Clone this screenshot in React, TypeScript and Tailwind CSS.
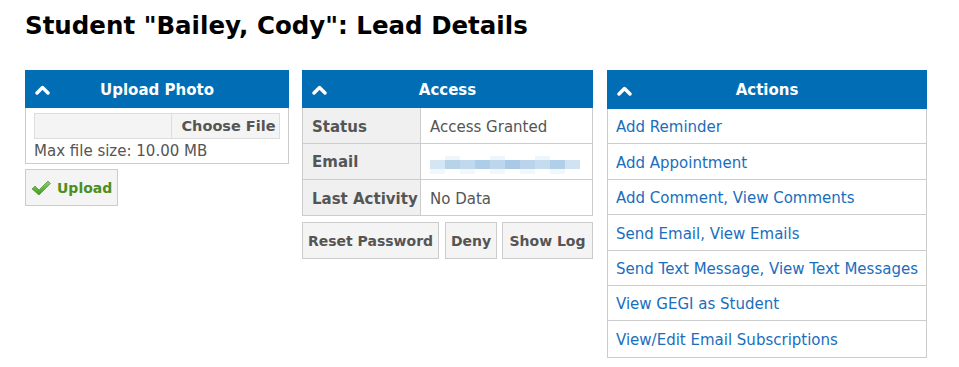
import React from 'react';

const font = { fontFamily: '"DejaVu Sans", Verdana, sans-serif' };

const Chevron = () => (
  <svg width="15" height="10" viewBox="0 0 15 10" className="block">
    <polyline points="2,8 7.5,2.5 13,8" fill="none" stroke="#fff" strokeWidth="3.4" strokeLinecap="round" strokeLinejoin="round" />
  </svg>
);

const PanelHeader = ({ title, h = 'h-[38px]' }: { title: string; h?: string }) => (
  <div className={`grid grid-cols-[40px_1fr_40px] items-center ${h} bg-[#006db5] text-white font-bold text-[15px] pt-[2px]`}>
    <div className="pl-[10px]">
      <Chevron />
    </div>
    <div className="text-center">{title}</div>
    <div />
  </div>
);

const Check = () => (
  <svg width="20" height="16" viewBox="0 0 20 16" className="block">
    <defs>
      <linearGradient id="chk" x1="0" y1="0" x2="0" y2="1">
        <stop offset="0" stopColor="#8fd16a" />
        <stop offset="1" stopColor="#3f9a1e" />
      </linearGradient>
    </defs>
    <path d="M1 9 L4 6 L8 10 L17 1 L19.5 3.5 L8 15 Z" fill="url(#chk)" stroke="#3b8a1c" strokeWidth="0.6" />
  </svg>
);

const GrayButton = ({ children, className = '' }: { children: React.ReactNode; className?: string }) => (
  <button className={`h-[37px] border border-[#cccccc] bg-[#f4f4f4] text-[#555] font-bold text-[14px] pt-[2px] ${className}`}>
    {children}
  </button>
);

const actions: string[][] = [
  ['Add Reminder'],
  ['Add Appointment'],
  ['Add Comment', 'View Comments'],
  ['Send Email', 'View Emails'],
  ['Send Text Message', 'View Text Messages'],
  ['View GEGI as Student'],
  ['View/Edit Email Subscriptions'],
];

const blurCells = [
  '#d4e6f4', '#b7d3ea', '#c0d9ee', '#aecde8', '#bcd6ec', '#a9c9e6', '#b9d4eb', '#c5dcef', '#b2cfe9', '#d0e3f3',
];

export default function App() {
  return (
    <div className="min-h-screen bg-white px-[25px] pt-[9px]" style={font}>
      <h1 className="text-[24.5px] font-bold text-black leading-[34px] mb-[27px]">Student "Bailey, Cody": Lead Details</h1>
      <div className="flex items-start">
        {/* Upload Photo */}
        <div className="w-[264px]">
          <PanelHeader title="Upload Photo" />
          <div className="border border-t-0 border-[#cccccc] px-[8px] pt-[5px] pb-[2px]">
            <div className="flex h-[26px]">
              <div className="w-[138px] bg-[#f4f4f4] border border-[#dddddd]" />
              <div className="w-[108px] bg-[#f4f4f4] border border-l-0 border-[#dddddd] flex items-center justify-center text-[#555] font-bold text-[14.5px] pt-[2px] pl-[6px]">
                Choose File
              </div>
            </div>
            <div className="text-[15px] text-[#555] leading-[20px] mt-[1px] pt-[1px]">Max file size: 10.00 MB</div>
          </div>
          <button className="mt-[5px] w-[93px] h-[37px] border border-[#cccccc] bg-[#f4f4f4] flex items-center pl-[5px] gap-[6px] pt-[1px]">
            <Check />
            <span className="text-[#4b8f1d] font-bold text-[14px]">Upload</span>
          </button>
        </div>

        {/* Access */}
        <div className="w-[291px] ml-[13px]">
          <PanelHeader title="Access" />
          <div className="border border-t-0 border-[#cccccc] text-[15px] text-[#555]">
            <div className="flex h-[36px] border-b border-[#cccccc]">
              <div className="w-[118px] bg-[#f0f0f0] border-r border-[#cccccc] font-bold pl-[9px] pt-[3px] flex items-center">Status</div>
              <div className="flex-1 pl-[9px] pt-[3px] flex items-center">Access Granted</div>
            </div>
            <div className="flex h-[36px] border-b border-[#cccccc]">
              <div className="w-[118px] bg-[#f0f0f0] border-r border-[#cccccc] font-bold pl-[9px] pt-[2px] flex items-center">Email</div>
              <div className="flex-1 pl-[9px] pt-[6px] flex items-center">
                <div className="flex h-[20px] items-center">
                  {blurCells.map((c, i) => (
                    <div key={i} className="flex flex-col w-[15px]">
                      <div className="h-[4px]" style={{ backgroundColor: i % 3 === 1 ? '#eef5fb' : 'transparent' }} />
                      <div className="h-[9px]" style={{ backgroundColor: c }} />
                      <div className="h-[5px]" style={{ backgroundColor: i % 2 === 0 ? '#f2f7fc' : 'transparent' }} />
                    </div>
                  ))}
                </div>
              </div>
            </div>
            <div className="flex h-[35px]">
              <div className="w-[118px] bg-[#f0f0f0] border-r border-[#cccccc] font-bold pl-[9px] pt-[3px] flex items-center">Last Activity</div>
              <div className="flex-1 pl-[9px] pt-[3px] flex items-center">No Data</div>
            </div>
          </div>
          <div className="flex mt-[6px]">
            <GrayButton className="w-[137px]">Reset Password</GrayButton>
            <GrayButton className="w-[52px] ml-[6px]">Deny</GrayButton>
            <GrayButton className="w-[91px] ml-[5px]">Show Log</GrayButton>
          </div>
        </div>

        {/* Actions */}
        <div className="w-[320px] ml-[14px]">
          <PanelHeader title="Actions" h="h-[39px]" />
          <div className="border border-t-0 border-[#cccccc] text-[15px] text-[#1a6ebd]">
            {actions.map((parts, i) => (
              <div
                key={i}
                className={`h-[35.4px] flex items-center pl-[8px] pt-[3px] ${i < actions.length - 1 ? 'border-b border-[#cccccc]' : ''}`}
              >
                <span>
                  {parts.map((p, j) => (
                    <React.Fragment key={j}>
                      {j > 0 && ', '}
                      <a className="cursor-pointer">{p}</a>
                    </React.Fragment>
                  ))}
                </span>
              </div>
            ))}
          </div>
        </div>
      </div>
    </div>
  );
}
